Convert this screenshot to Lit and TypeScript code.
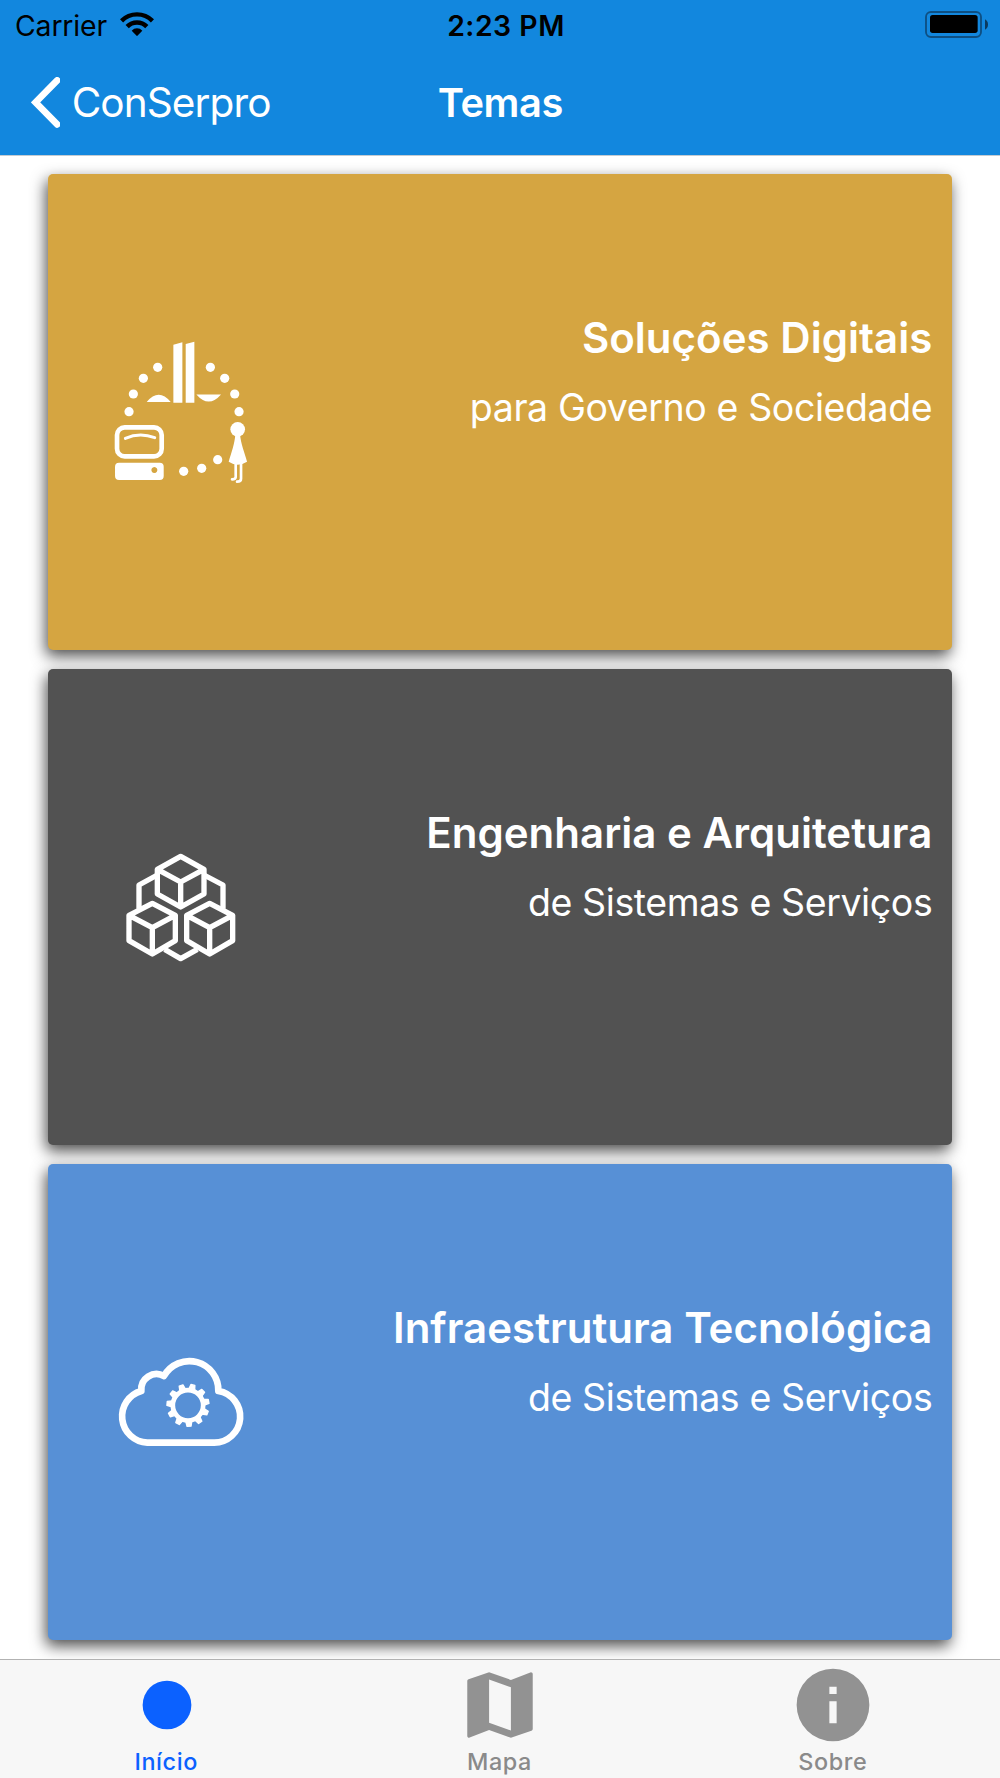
import { LitElement, html, svg, css } from "lit";
import type { TemplateResult } from "lit";
import { customElement, property, state } from "lit/decorators.js";
import { classMap } from "lit/directives/class-map.js";

type Point = [number, number];

const FONT = css`"Inter", "Liberation Sans", sans-serif`;

/* ---------- theme pictures ---------- */

const DOTS: Point[] = [
  [174, 127], [131, 160], [101, 207], [88, 260],
  [332, 127], [375, 160], [405, 207], [418, 260],
  [252, 439], [306, 430], [354, 404],
];

const societyPicture = html`
  <svg class="picture" viewBox="3.9 21 480 480" fill="#fff" aria-hidden="true">
    <path d="M221 59 L248 52 V233 H221Z M258 57 L284 50 V233 H258Z" />
    <path d="M141 231 Q177 188 213 231Z M290 208.500 H364 Q327 251 290 208.500Z" />
    ${DOTS.map(([x, y]) => svg`<circle cx=${x} cy=${y} r="13.8" />`)}
    <rect x="52" y="307" width="134" height="87" rx="23" fill="none" stroke="#fff" stroke-width="14" />
    <path d="M77 340 Q120 321 165 338" fill="none" stroke="#fff" stroke-width="9" stroke-linecap="round" />
    <path
      fill-rule="evenodd"
      d="M58 413 H180 A12 12 0 0 1 192 425 V453 A12 12 0 0 1 180 465 H58 A12 12 0 0 1 46 453 V425 A12 12 0 0 1 58 413Z M164 426 a9 9 0 1 0 .01 0Z"
    />
    <circle cx="414" cy="313" r="22" />
    <path d="M407 326 H421 C423 358 435 382 442 410 Q414 428 387 410 C395 382 405 358 407 326Z" />
    <path
      d="M408 412 V456 Q408 463 397 463 M424 412 V461 Q424 470 412 470"
      fill="none" stroke="#fff" stroke-width="8" stroke-linecap="round"
    />
  </svg>
`;

const cubesPicture = html`
  <svg
    class="picture" viewBox="-26 -39 480 480" fill="none" stroke="#fff"
    stroke-width="16" stroke-linejoin="round" aria-hidden="true"
  >
    <path d="M213 49 L283 88 V162 L213 201 L143 162 V88Z M143 88 L213 126 L283 88 M213 126 V201" />
    <path d="M128 190 L197 226 V302 L128 342 L58 302 V226Z M58 226 L128 263 L197 226 M128 263 V342" />
    <path d="M300 190 L369 226 V302 L300 342 L231 302 V226Z M231 226 L300 263 L369 226 M300 263 V342" />
    <path d="M143 105 L88 135 V206 M283 105 L340 135 V206 M165 328 L213 356 L263 328" />
  </svg>
`;

const TEETH = Array.from({ length: 11 }, (_, i) => 13.5 + (i * 360) / 11);

const cloudPicture = html`
  <svg class="picture" viewBox="-11 -53 480 480" aria-hidden="true">
    <path
      d="M128 309 H328 A78 78 0 0 0 341 154 A87 87 0 0 0 178 109 A46 46 0 0 0 110 154 A79 79 0 0 0 128 309Z"
      fill="none" stroke="#fff" stroke-width="20" stroke-linejoin="round"
    />
    <circle cx="250" cy="197" r="45.500" fill="none" stroke="#fff" stroke-width="14" />
    ${TEETH.map(
      (angle) => svg`
        <path
          d="M241 149 L244 134 H256 L259 149Z" fill="#fff" stroke="#fff"
          stroke-width="4" stroke-linejoin="round"
          transform=${`rotate(${angle} 250 197)`}
        />`,
    )}
  </svg>
`;

/* ---------- tab icons ---------- */

const dotIcon = svg`<circle cx="12" cy="12" r="6.700" />`;
const mapIcon = svg`<path d="M20.500 3l-.16.03L15 5.100 9 3 3.360 4.900c-.21.07-.36.25-.36.48V20.500c0 .28.22.5.5.5l.16-.03L9 18.900l6 2.100 5.640-1.900c.21-.07.36-.25.36-.48V3.500c0-.28-.22-.5-.5-.5zM15 19l-6-2.110V5l6 2.110V19z" />`;
const infoIcon = svg`<path fill-rule="evenodd" d="M12 2a10 10 0 1 0 0 20a10 10 0 1 0 0-20zM13 17h-2v-6h2v6zM13 9h-2V7h2v2z" />`;

/* ---------- header ---------- */

@customElement("app-header")
class AppHeader extends LitElement {
  @property() back = "";
  @property() heading = "";

  static styles = css`
    :host {
      display: block;
      box-sizing: border-box;
      height: 155px;
      padding-top: 8px;
      background: #1287de;
      font-family: ${FONT};
      box-shadow: 0 1px 0 #c3cbd2;
    }
    .status,
    .nav {
      display: grid;
      grid-template-columns: 1fr auto 1fr;
    }
    .status {
      height: 36px;
      padding: 0 12px 0 15px;
      align-items: center;
      font-size: 28.4px;
      line-height: 36px;
      color: #000;
    }
    .carrier {
      display: flex;
      align-items: center;
      gap: 13px;
      letter-spacing: -0.15px;
    }
    .wifi {
      width: 34px;
      height: 24.3px;
      margin-bottom: 4px;
    }
    .time {
      padding-left: 9px;
      font-weight: 580;
      letter-spacing: 0.5px;
    }
    .battery {
      width: 63px;
      height: 27px;
      margin-bottom: 3px;
      justify-self: end;
    }
    .nav {
      padding: 33px 30px 0 30.5px;
      line-height: 50px;
      color: #fff;
    }
    .back {
      display: flex;
      align-items: center;
      gap: 11.5px;
      font-size: 40.5px;
      letter-spacing: -0.9px;
    }
    .chevron {
      width: 29.7px;
      height: 50.7px;
    }
    .heading {
      margin: 0;
      padding-top: 1px;
      font-size: 39.8px;
      font-weight: 600;
      letter-spacing: -0.4px;
    }
  `;

  render() {
    return html`
      <div class="status">
        <div class="carrier">
          <span>Carrier</span>
          <svg class="wifi" viewBox="363 36 102 73" fill="none" stroke="#000" stroke-width="13.500" aria-hidden="true">
            <path d="M367.500 62.500 A65.500 65.500 0 0 1 460.500 62.500" />
            <path d="M384.500 80 A41 41 0 0 1 443.500 80" />
            <path d="M398 92 A22 22 0 0 1 430 92 L414 108.500Z" fill="#000" stroke="none" />
          </svg>
        </div>
        <span class="time">2:23 PM</span>
        <svg class="battery" viewBox="135 33 189 81" aria-hidden="true">
          <rect x="138" y="36" width="165" height="75" rx="15" fill="none" stroke="#0e4f82" stroke-width="5.500" />
          <rect x="150" y="45" width="143" height="54" rx="8" />
          <path d="M315 58 Q324 63 324 73.500 Q324 84 315 89Z" fill="#0b3a5f" />
        </svg>
      </div>
      <div class="nav">
        <div class="back">
          <svg class="chevron" viewBox="93 230 89 152" aria-hidden="true">
            <path
              d="M171.500 240 L106.500 306 L171.500 372"
              fill="none" stroke="#fff" stroke-width="20" stroke-linecap="round"
            />
          </svg>
          <span>${this.back}</span>
        </div>
        <h1 class="heading">${this.heading}</h1>
      </div>
    `;
  }
}

/* ---------- theme card ---------- */

@customElement("theme-card")
class ThemeCard extends LitElement {
  @property() heading = "";
  @property() detail = "";
  @property() tone = "";
  @property({ attribute: false }) picture?: TemplateResult;

  static styles = css`
    :host {
      display: block;
      font-family: ${FONT};
    }
    .card {
      display: flex;
      justify-content: space-between;
      box-sizing: border-box;
      height: 476px;
      padding: 0 19.4px 0 52.6px;
      border-radius: 5px;
      color: #fff;
      box-shadow: -2px 6px 15px rgba(0, 0, 0, 0.7);
    }
    .gold { background: #d5a541; }
    .graphite { background: #525252; }
    .blue { background: #5790d6; }
    .picture {
      width: 160px;
      height: 160px;
      align-self: center;
    }
    .text {
      display: flex;
      flex-direction: column;
      gap: 22px;
      padding-top: 138.8px;
      text-align: right;
      white-space: nowrap;
    }
    .heading {
      margin: 0;
      font-size: 42px;
      font-weight: 600;
      line-height: 50px;
      letter-spacing: 0.03px;
    }
    .detail {
      margin: 0;
      font-size: 37.5px;
      line-height: 46px;
      letter-spacing: -0.4px;
    }
  `;

  render() {
    return html`
      <article class=${classMap({ card: true, [this.tone]: true })}>
        ${this.picture}
        <div class="text">
          <h2 class="heading">${this.heading}</h2>
          <p class="detail">${this.detail}</p>
        </div>
      </article>
    `;
  }
}

/* ---------- tab bar ---------- */

const TABS = [
  { label: "Início", icon: dotIcon },
  { label: "Mapa", icon: mapIcon },
  { label: "Sobre", icon: infoIcon },
];

@customElement("tab-bar")
class TabBar extends LitElement {
  @state() private active = 0;

  static styles = css`
    :host {
      display: block;
      position: relative;
      box-sizing: border-box;
      height: 119px;
      border-top: 1px solid #b2b2b2;
      background: #f7f7f7;
      font-family: ${FONT};
    }
    .tabs {
      display: grid;
      grid-template-columns: repeat(3, 1fr);
    }
    .tab {
      display: flex;
      flex-direction: column;
      align-items: center;
      gap: 2.8px;
      padding: 5.4px 0 0;
      border: 0;
      background: none;
      font-family: inherit;
      font-size: 23.4px;
      font-weight: 480;
      line-height: 28px;
      letter-spacing: 0.6px;
      color: #8a8a8a;
    }
    .label {
      margin-right: 1px;
    }
    .icon {
      width: 80px;
      height: 80px;
      fill: #929292;
    }
    .active { color: #0b61ff; }
    .active .icon { fill: #0b61ff; }
  `;

  render() {
    return html`
      <nav class="tabs">
        ${TABS.map(
          (tab, i) => html`
            <button class=${classMap({ tab: true, active: i === this.active })} @click=${() => (this.active = i)}>
              <svg class="icon" viewBox="1 1 22 22" aria-hidden="true">${tab.icon}</svg>
              <span class="label">${tab.label}</span>
            </button>
          `,
        )}
      </nav>
    `;
  }
}

/* ---------- page ---------- */

const THEMES = [
  { heading: "Soluções Digitais", detail: "para Governo e Sociedade", tone: "gold", picture: societyPicture },
  { heading: "Engenharia e Arquitetura", detail: "de Sistemas e Serviços", tone: "graphite", picture: cubesPicture },
  { heading: "Infraestrutura Tecnológica", detail: "de Sistemas e Serviços", tone: "blue", picture: cloudPicture },
];

@customElement("app-root")
class AppRoot extends LitElement {
  static styles = css`
    :host {
      display: flex;
      flex-direction: column;
      height: 1778px;
      overflow: hidden;
      background: #fff;
    }
    .themes {
      flex: 1;
      min-height: 0;
      display: flex;
      flex-direction: column;
      gap: 19.2px;
      padding: 19px 48.3px 0 48.3px;
    }
  `;

  render() {
    return html`
      <app-header back="ConSerpro" heading="Temas"></app-header>
      <main class="themes">
        ${THEMES.map(
          (t) => html`
            <theme-card
              heading=${t.heading}
              detail=${t.detail}
              tone=${t.tone}
              .picture=${t.picture}
            ></theme-card>
          `,
        )}
      </main>
      <tab-bar></tab-bar>
    `;
  }
}
